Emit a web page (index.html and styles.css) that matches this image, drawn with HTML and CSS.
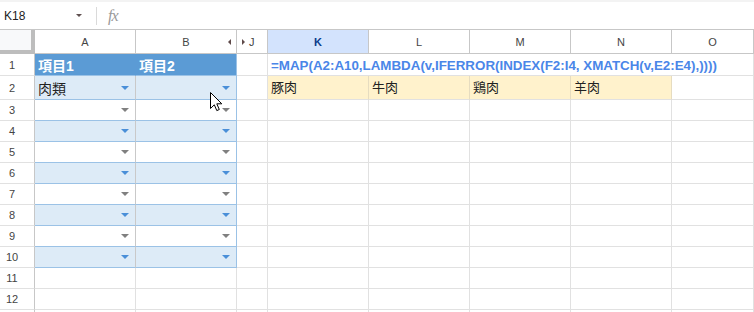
FILE: index.html
```html
<!DOCTYPE html>
<html lang="ja">
<head>
    <meta charset="UTF-8">
    <title>Sheet</title>
    <link rel="stylesheet" href="styles.css">
</head>
<body>
    <div class="toolbar">
        <div class="namebox">K18</div>
        <span class="namebox-arrow"></span>
        <span class="divider"></span>
        <span class="fx">fx</span>
    </div>

    <div class="sheet">
        <div class="row head-row">
            <div class="cell corner"></div>
            <div class="cell col">A</div>
            <div class="cell col col-b">B<span class="hide-left"></span></div>
            <div class="cell col col-j"><span class="hide-right"></span>J</div>
            <div class="cell col active">K</div>
            <div class="cell col">L</div>
            <div class="cell col">M</div>
            <div class="cell col">N</div>
            <div class="cell col">O</div>
        </div>

        <div class="row r1">
            <div class="cell rh">1</div>
            <div class="cell tb-head tb-a">項目1</div>
            <div class="cell tb-head tb-b">項目2</div>
            <div class="cell"></div>
            <div class="cell formula span5">=MAP(A2:A10,LAMBDA(v,IFERROR(INDEX(F2:I4, XMATCH(v,E2:E4),))))</div>
        </div>

        <div class="row r2">
            <div class="cell rh">2</div>
            <div class="cell band tb-a"><span class="val">肉類</span><span class="dd"></span></div>
            <div class="cell band tb-b"><span class="dd"></span></div>
            <div class="cell"></div>
            <div class="cell yellow">豚肉</div>
            <div class="cell yellow">牛肉</div>
            <div class="cell yellow">鶏肉</div>
            <div class="cell yellow">羊肉</div>
            <div class="cell"></div>
        </div>

        <div class="row">
            <div class="cell rh">3</div>
            <div class="cell plain tb-a"><span class="dd"></span></div>
            <div class="cell plain tb-b"><span class="dd"></span></div>
            <div class="cell"></div><div class="cell"></div><div class="cell"></div><div class="cell"></div><div class="cell"></div><div class="cell"></div>
        </div>

        <div class="row">
            <div class="cell rh">4</div>
            <div class="cell band tb-a"><span class="dd"></span></div>
            <div class="cell band tb-b"><span class="dd"></span></div>
            <div class="cell"></div><div class="cell"></div><div class="cell"></div><div class="cell"></div><div class="cell"></div><div class="cell"></div>
        </div>

        <div class="row">
            <div class="cell rh">5</div>
            <div class="cell plain tb-a"><span class="dd"></span></div>
            <div class="cell plain tb-b"><span class="dd"></span></div>
            <div class="cell"></div><div class="cell"></div><div class="cell"></div><div class="cell"></div><div class="cell"></div><div class="cell"></div>
        </div>

        <div class="row">
            <div class="cell rh">6</div>
            <div class="cell band tb-a"><span class="dd"></span></div>
            <div class="cell band tb-b"><span class="dd"></span></div>
            <div class="cell"></div><div class="cell"></div><div class="cell"></div><div class="cell"></div><div class="cell"></div><div class="cell"></div>
        </div>

        <div class="row">
            <div class="cell rh">7</div>
            <div class="cell plain tb-a"><span class="dd"></span></div>
            <div class="cell plain tb-b"><span class="dd"></span></div>
            <div class="cell"></div><div class="cell"></div><div class="cell"></div><div class="cell"></div><div class="cell"></div><div class="cell"></div>
        </div>

        <div class="row">
            <div class="cell rh">8</div>
            <div class="cell band tb-a"><span class="dd"></span></div>
            <div class="cell band tb-b"><span class="dd"></span></div>
            <div class="cell"></div><div class="cell"></div><div class="cell"></div><div class="cell"></div><div class="cell"></div><div class="cell"></div>
        </div>

        <div class="row">
            <div class="cell rh">9</div>
            <div class="cell plain tb-a"><span class="dd"></span></div>
            <div class="cell plain tb-b"><span class="dd"></span></div>
            <div class="cell"></div><div class="cell"></div><div class="cell"></div><div class="cell"></div><div class="cell"></div><div class="cell"></div>
        </div>

        <div class="row">
            <div class="cell rh">10</div>
            <div class="cell band tb-a"><span class="dd"></span></div>
            <div class="cell band tb-b"><span class="dd"></span></div>
            <div class="cell"></div><div class="cell"></div><div class="cell"></div><div class="cell"></div><div class="cell"></div><div class="cell"></div>
        </div>

        <div class="row">
            <div class="cell rh">11</div>
            <div class="cell"></div><div class="cell"></div><div class="cell"></div><div class="cell"></div><div class="cell"></div><div class="cell"></div><div class="cell"></div><div class="cell"></div>
        </div>

        <div class="row">
            <div class="cell rh">12</div>
            <div class="cell"></div><div class="cell"></div><div class="cell"></div><div class="cell"></div><div class="cell"></div><div class="cell"></div><div class="cell"></div><div class="cell"></div>
        </div>

        <div class="row">
            <div class="cell rh"></div>
            <div class="cell"></div><div class="cell"></div><div class="cell"></div><div class="cell"></div><div class="cell"></div><div class="cell"></div><div class="cell"></div><div class="cell"></div>
        </div>

        <svg class="cursor" width="14" height="21" viewBox="0 0 14 21">
            <path d="M0.5 0.5 L0.5 16.5 L4.3 12.8 L6.8 18.6 L9.3 17.5 L6.8 11.8 L11.8 11.8 Z" fill="#ffffff" stroke="#000000" stroke-width="1" stroke-linejoin="miter"/>
        </svg>
    </div>
</body>
</html>
```

FILE: styles.css
```css
* {
    margin: 0;
    padding: 0;
    box-sizing: border-box;
}

body {
    font-family: 'Liberation Sans', Arial, 'Noto Sans CJK JP', sans-serif;
    background: #ffffff;
    color: #222222;
    width: 754px;
    height: 312px;
    overflow: hidden;
}

/* formula bar */
.toolbar {
    height: 30px;
    border-top: 2px solid #f3f3f3;
    border-bottom: 1px solid #c7c7c7;
    display: flex;
    align-items: center;
}

.namebox {
    width: 76px;
    padding-left: 4px;
    font-size: 12px;
    color: #222222;
}

.namebox-arrow {
    width: 0;
    height: 0;
    border-left: 3px solid transparent;
    border-right: 3px solid transparent;
    border-top: 3px solid #5f5050;
}

.divider {
    width: 1px;
    height: 18px;
    background: #dadada;
    margin-left: 14px;
}

.fx {
    margin-left: 11px;
    font-family: 'Liberation Serif', serif;
    font-style: italic;
    font-size: 16px;
    color: #9a9a9a;
    letter-spacing: -1px;
}

/* grid */
.sheet {
    position: relative;
}

.row {
    display: grid;
    grid-template-columns: 35px 101px 101px 31px 101px 101px 101px 101px 1fr;
    height: 21px;
}

.head-row {
    height: 24px;
}

.r1 {
    height: 22px;
}

.r2 {
    height: 24px;
}

.cell {
    border-right: 1px solid #e1e1e1;
    border-bottom: 1px solid #e1e1e1;
    display: flex;
    align-items: center;
    font-size: 13px;
    min-width: 0;
}

.col {
    justify-content: center;
    font-size: 11px;
    color: #444444;
    border-right-color: #c7c7c7;
    border-bottom-color: #c7c7c7;
}

.corner {
    background: #f8f9fa;
    border-right: 4px solid #bdbdbd;
    border-bottom: 4px solid #bdbdbd;
}

.active {
    background: #d3e3fd;
    color: #0b3a8a;
    font-weight: bold;
}

.col-b {
    position: relative;
}

.hide-left {
    position: absolute;
    right: 5px;
    top: 9px;
    border-top: 3px solid transparent;
    border-bottom: 3px solid transparent;
    border-right: 3px solid #5f4a4a;
}

.col-j {
    justify-content: flex-start;
    padding-left: 5px;
    gap: 4px;
}

.hide-right {
    border-top: 3px solid transparent;
    border-bottom: 3px solid transparent;
    border-left: 3px solid #5f4a4a;
}

.rh {
    justify-content: center;
    padding-right: 10px;
    font-size: 11px;
    color: #444444;
    border-right-color: #c7c7c7;
}

/* table A1:B10 */
.tb-head {
    background: #5b9bd5;
    color: #ffffff;
    font-weight: bold;
    font-size: 14px;
    padding-left: 3px;
    border-bottom-color: #9bc2e6;
}

.tb-head.tb-a {
    border-right-color: #5b9bd5;
}

.band {
    background: #ddebf7;
}

.plain {
    background: #ffffff;
}

.tb-a {
    border-right-color: #c9c9c9;
    border-bottom-color: #9bc2e6;
}

.tb-b {
    border-right-color: #9bc2e6;
    border-bottom-color: #9bc2e6;
}

.val {
    padding-left: 3px;
    font-size: 14px;
    color: #222222;
}

.dd {
    margin-left: auto;
    margin-right: 6px;
    width: 0;
    height: 0;
    border-left: 4px solid transparent;
    border-right: 4px solid transparent;
    border-top: 4px solid #4a8fd8;
}

.plain .dd {
    border-top-color: #808080;
}

/* formula output */
.span5 {
    grid-column: span 5;
}

.formula {
    align-items: flex-end;
    padding-left: 3px;
    padding-bottom: 2px;
    font-weight: bold;
    font-size: 13.35px;
    color: #4a86e8;
    white-space: nowrap;
    overflow: hidden;
}

.yellow {
    background: #fff2cc;
    border-right-color: #e6dcc0;
    padding-left: 3px;
    align-items: flex-end;
    padding-bottom: 3px;
    font-size: 13px;
}

.cursor {
    position: absolute;
    left: 210px;
    top: 62px;
}
```
